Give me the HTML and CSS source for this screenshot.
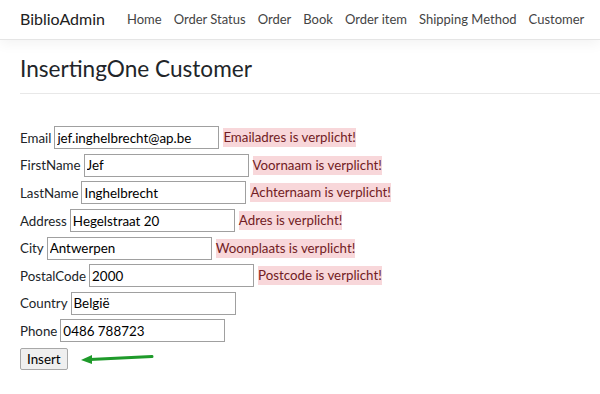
FILE: index.html
```html
<!DOCTYPE html>
<html>
<head>
<meta charset="utf-8">
<link rel="stylesheet" href="styles.css">
</head>
<body>
<header class="navbar">
  <span class="brand">BiblioAdmin</span>
  <nav class="nav">
    <a>Home</a><a>Order Status</a><a>Order</a><a>Book</a><a>Order item</a><a>Shipping Method</a><a>Customer</a>
  </nav>
</header>
<main class="main">
  <h1 class="title">InsertingOne Customer</h1>
  <hr class="rule">
  <form class="form">
    <div class="row"><label>Email</label><input class="field" value="jef.inghelbrecht@ap.be"><span class="err">Emailadres is verplicht!</span></div>
    <div class="row"><label>FirstName</label><input class="field" value="Jef"><span class="err">Voornaam is verplicht!</span></div>
    <div class="row"><label>LastName</label><input class="field" value="Inghelbrecht"><span class="err">Achternaam is verplicht!</span></div>
    <div class="row"><label>Address</label><input class="field" value="Hegelstraat 20"><span class="err">Adres is verplicht!</span></div>
    <div class="row"><label>City</label><input class="field" value="Antwerpen"><span class="err">Woonplaats is verplicht!</span></div>
    <div class="row"><label>PostalCode</label><input class="field" value="2000"><span class="err">Postcode is verplicht!</span></div>
    <div class="row"><label>Country</label><input class="field" value="België"></div>
    <div class="row"><label>Phone</label><input class="field" value="0486 788723"></div>
    <div class="row actions">
      <button type="button" class="btn">Insert</button>
      <svg class="arrow" width="76" height="12" viewBox="0 0 76 12"><path d="M72 3.5 L10 6.5" stroke="#1e9a2a" stroke-width="3" stroke-linecap="round" fill="none"/><path d="M1 7 L12 2 L12 11 Z" fill="#1e9a2a"/></svg>
    </div>
  </form>
</main>
</body>
</html>
```
FILE: styles.css
```css
html, body { margin: 0; padding: 0; background: #fff; }
body { font-family: "Lato", "Noto Sans", sans-serif; font-size: 13.3px; color: #212529; }
.navbar {
  height: 37px;
  padding: 0 20px 2px;
  display: flex;
  align-items: center;
  border-bottom: 1px solid #e5e5e5;
  box-shadow: 0 4px 12px rgba(0,0,0,0.05);
  white-space: nowrap;
}
.brand { font-size: 16px; color: #212121; margin-right: 22px; }
.nav { display: flex; gap: 12px; flex-shrink: 0; }
.nav a { font-size: 13px; color: #444; }
.main { padding: 0 20px; }
.title { margin: 15px 0 0; font-size: 22.6px; font-weight: 400; line-height: 28px; color: #212529; }
.rule { margin: 10px -20px 0 0; border: 0; border-top: 1px solid #e8e8e8; }
.form { padding-top: 32px; display: flex; flex-direction: column; gap: 4px; }
.row { display: flex; align-items: center; height: 23.6px; white-space: nowrap; }
.row label { margin-right: 3px; }
.field {
  width: 165px; height: 23px; box-sizing: border-box;
  border: 1px solid #a0a0a0; padding: 0 2px;
  font-family: inherit; font-size: 13.4px; color: #000;
}
.err { margin-left: 4px; background: #f8d7da; color: #721c24; padding: 1px 0; line-height: 17px; }
.actions { margin-top: 0; }
.btn {
  height: 22px; padding: 0 6px; font-family: inherit; font-size: 13.4px;
  background: #efefef; border: 1px solid #a8a8a8; border-radius: 2px; color: #000;
}
.arrow { margin-left: 12px; }
```
